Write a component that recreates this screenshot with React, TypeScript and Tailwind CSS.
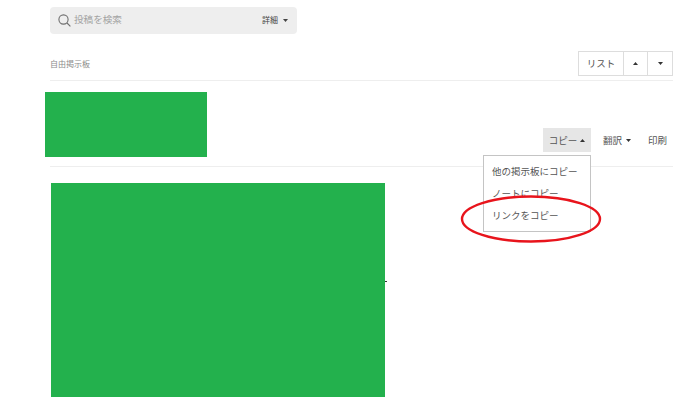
const font = { fontFamily: '"Noto Sans CJK JP", "Liberation Sans", sans-serif' };

function Caret({ up = false, className = "" }: { up?: boolean; className?: string }) {
  return (
    <svg width="5" height="3" viewBox="0 0 5 3" className={className}>
      <path d={up ? "M2.5 0L5 3H0z" : "M0 0h5L2.5 3z"} fill="currentColor" />
    </svg>
  );
}

function SearchBar() {
  return (
    <div className="flex h-[27px] w-[247px] items-center rounded-sm bg-[#eeeeee] pl-2 pr-[9px]">
      <svg width="13" height="13" viewBox="0 0 13 13" fill="none" stroke="#6f6f6f" strokeWidth="1.1">
        <circle cx="5.5" cy="5.5" r="4.6" />
        <path d="M9 9l3.4 3.4" />
      </svg>
      <span className="ml-[3px] -mt-[2px] text-[9.6px] text-[#a3a3a3]">投稿を検索</span>
      <span className="ml-auto -mt-[1px] text-[8px] text-[#444444]">詳細</span>
      <Caret className="ml-[5px] text-[#444444]" />
    </div>
  );
}

function ListButtons() {
  return (
    <div className="flex h-[25px] border border-[#dddddd] text-[#555555]">
      <div className="flex w-[44px] items-center justify-center text-[9.5px]">リスト</div>
      <div className="flex w-[24px] items-center justify-center border-l border-[#dddddd] text-[#333333]">
        <Caret up />
      </div>
      <div className="flex w-[25px] items-center justify-center border-l border-[#dddddd] text-[#333333]">
        <Caret />
      </div>
    </div>
  );
}

function CopyMenu() {
  return (
    <div className="absolute right-[82px] top-[27px] z-10 flex h-[77px] w-[108px] flex-col border border-[#c4c4c4] bg-white px-2 pt-[6px] text-[9.5px] text-[#555555]">
      <div className="h-[22px] leading-[18px] whitespace-nowrap">他の掲示板にコピー</div>
      <div className="h-[22px] leading-[18px] whitespace-nowrap">ノートにコピー</div>
      <div className="h-[22px] leading-[18px] whitespace-nowrap">リンクをコピー</div>
    </div>
  );
}

function ArticleTools() {
  return (
    <div className="relative flex h-[24px] items-center justify-end text-[9.5px] text-[#555555]">
      <div className="flex h-full w-[48px] items-center justify-center gap-[3px] bg-[#e6e6e6]">
        コピー
        <Caret up className="text-[#333333]" />
      </div>
      <div className="ml-3 flex items-center gap-[4px]">
        翻訳
        <Caret className="text-[#333333]" />
      </div>
      <div className="ml-[17px] mr-[6px]">印刷</div>
      <CopyMenu />
    </div>
  );
}

export default function App() {
  return (
    <div className="relative h-[402px] w-[700px] overflow-hidden bg-white" style={font}>
      <div className="w-[673px] pl-[50px] pt-[7px]">
        <SearchBar />
        <div className="mt-[17px] flex h-[25px] items-center justify-between">
          <span className="text-[8px] text-[#8a8a8a]">自由掲示板</span>
          <ListButtons />
        </div>
        <div className="mt-[4px] border-t border-[#eeeeee]" />
        <div className="mt-[11px] flex h-[75px] items-start justify-between border-b border-[#eeeeee]">
          <div className="-ml-[5px] h-[65px] w-[162px] bg-[#23b14d]" />
          <div className="mt-[36px] flex-1">
            <ArticleTools />
          </div>
        </div>
        <div className="mt-[16px] flex items-start">
          <div className="ml-px h-[214px] w-[334px] bg-[#23b14d]" />
          <div className="mt-[98px] h-px w-[2px] bg-[#333333]" />
        </div>
      </div>
      <svg className="pointer-events-none absolute left-[460px] top-[194px] z-20" width="142" height="50" viewBox="0 0 142 50" fill="none">
        <ellipse cx="71" cy="25" rx="69" ry="22.5" stroke="#e8141c" strokeWidth="2.4" />
      </svg>
    </div>
  );
}
